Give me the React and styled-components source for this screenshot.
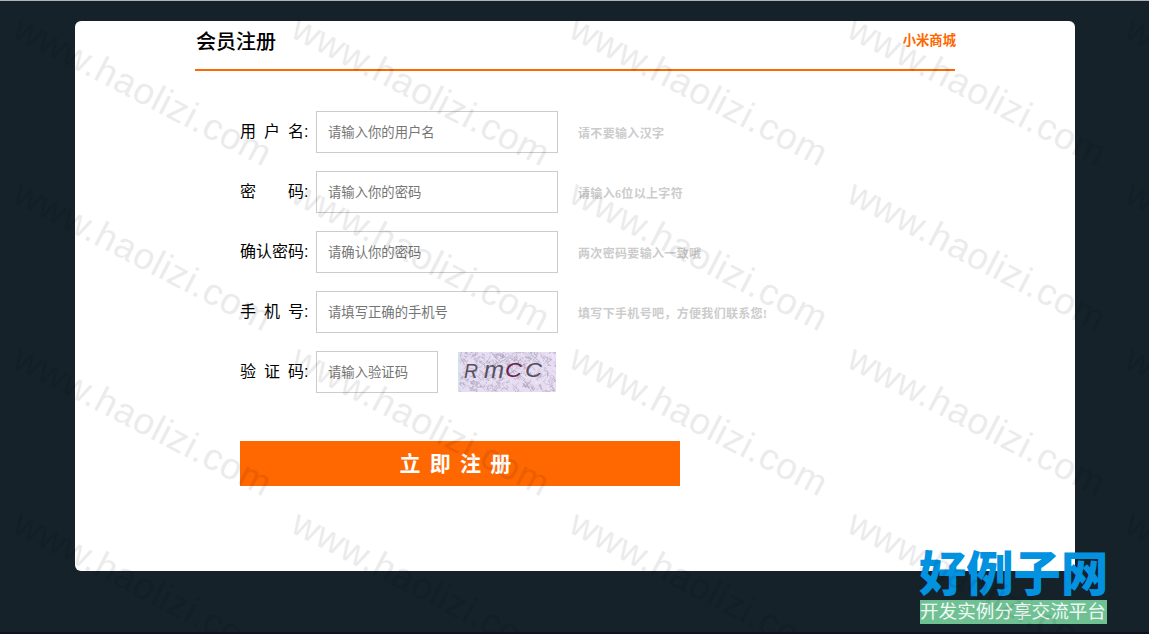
import React from 'react';
import styled, { createGlobalStyle } from 'styled-components';

const fields = [
  { label: ['用', '户', '名'], placeholder: '请输入你的用户名', hint: '请不要输入汉字' },
  { label: ['密', '码'], placeholder: '请输入你的密码', hint: '请输入6位以上字符' },
  { label: ['确', '认', '密', '码'], placeholder: '请确认你的密码', hint: '两次密码要输入一致哦' },
  { label: ['手', '机', '号'], placeholder: '请填写正确的手机号', hint: '填写下手机号吧，方便我们联系您!' },
];

// small repeatable generator, so the captcha noise is the same on every render
function makeNoise(count) {
  let seed = 29;
  const next = () => {
    seed = (seed * 16807) % 2147483647;
    return seed / 2147483647;
  };
  const colors = ['#a79fb8', '#b8b0c6', '#a19bb0', '#c9b4d0', '#b0aebf', '#f3ecfa'];
  return Array.from({ length: count }, () => {
    const x = next() * 98;
    const y = next() * 40;
    const d = () => (next() * 7 - 3.5).toFixed(1);
    return {
      d: `M${x.toFixed(1)} ${y.toFixed(1)}l${d()} ${d()}l${d()} ${d()}`,
      color: colors[Math.floor(next() * colors.length)],
    };
  });
}

const noise = makeNoise(480);

function Captcha() {
  return (
    <CaptchaImage viewBox="0 0 98 40">
      <rect width="98" height="40" fill="#e6ddf2" />
      <g fill="none" strokeWidth="0.6">
        {noise.map((n, i) => <path key={i} d={n.d} stroke={n.color} />)}
      </g>
      <rect width="1.5" height="40" fill="#cfe4f0" />
      <g fontFamily="Liberation Sans, sans-serif" fontStyle="italic" fill="#55505e">
        <text x="6" y="26" fontSize="21" textLength="14" lengthAdjust="spacingAndGlyphs">R</text>
        <text x="26" y="26" fontSize="23" textLength="20" lengthAdjust="spacingAndGlyphs">m</text>
        <text x="47" y="25" fontSize="21" textLength="17" lengthAdjust="spacingAndGlyphs" fill="#6b2549">C</text>
        <text x="67" y="25" fontSize="21" textLength="17" lengthAdjust="spacingAndGlyphs">C</text>
      </g>
    </CaptchaImage>
  );
}

function Field({ label, placeholder, hint, short, children }) {
  return (
    <Row>
      <Label>
        <LabelText>{label.map((c, i) => <span key={i}>{c}</span>)}</LabelText>:
      </Label>
      <Input placeholder={placeholder} $short={short} />
      {children}
      {hint && <Hint>{hint}</Hint>}
    </Row>
  );
}

function App() {
  return (
    <Page>
      <GlobalStyle />
      <Panel>
        <Header>
          <Title>会员注册</Title>
          <ShopLink href="#">小米商城</ShopLink>
        </Header>
        <Form>
          {fields.map(f => <Field key={f.placeholder} {...f} />)}
          <Field label={['验', '证', '码']} placeholder="请输入验证码" short>
            <Captcha />
          </Field>
          <Submit type="button">立即注册</Submit>
        </Form>
      </Panel>
      <SiteBadge>
        <SiteName>好例子网</SiteName>
        <SiteSlogan>开发实例分享交流平台</SiteSlogan>
      </SiteBadge>
      <Watermark>
        {Array.from({ length: 20 }, (_, i) => (
          <Mark key={i}>www.haolizi.com</Mark>
        ))}
      </Watermark>
    </Page>
  );
}

export default App;

const GlobalStyle = createGlobalStyle`
* {
    box-sizing: border-box;
}
body {
    margin: 0;
    font-family: "Liberation Sans", "Noto Sans CJK SC", sans-serif;
}
`;

const Page = styled.div`
position: relative;
height: 634px;
padding-top: 20px;
overflow: hidden;
background: #15222a;
border-top: 1px solid #b1b3b4;
border-bottom: 2px solid #10131f;
`;

const Panel = styled.main`
width: 1000px;
height: 550px;
margin-left: 75px;
padding: 0 120px;
background: #fff;
border-radius: 6px;
`;

const Header = styled.header`
display: flex;
justify-content: space-between;
height: 50px;
border-bottom: 2px solid #ff6700;
`;

const Title = styled.h1`
margin: 0 0 0 1px;
font-family: "Liberation Serif", "Noto Sans CJK SC", serif;
font-size: 20px;
font-weight: 500;
line-height: 42px;
`;

const ShopLink = styled.a`
margin-right: -1px;
color: #ff6700;
font-size: 13.33px;
font-weight: bold;
line-height: 40px;
text-decoration: none;
`;

const Form = styled.form`
display: flex;
flex-direction: column;
gap: 18px;
padding: 40px 0 0 45px;
`;

const Row = styled.div`
display: flex;
align-items: center;
height: 42px;
`;

const Label = styled.label`
display: flex;
width: 76px;
font-size: 16px;
line-height: 40px;
`;

const LabelText = styled.span`
display: flex;
justify-content: space-between;
width: 64px;
`;

const Input = styled.input`
width: ${props => (props.$short ? '122px' : '242px')};
height: 42px;
padding: 0 11px;
border: 1px solid #ccc;
border-radius: 0;
background: transparent;
font-family: inherit;
font-size: 13.33px;
&::placeholder {
    color: #757575;
}
`;

const Hint = styled.span`
margin-left: 20px;
padding-top: 2px;
color: #ccc;
font-family: "Liberation Serif", "Noto Sans CJK SC", serif;
font-size: 12px;
font-weight: bold;
letter-spacing: 0.33px;
white-space: nowrap;
`;

const CaptchaImage = styled.svg`
width: 98px;
height: 40px;
margin-left: 20px;
`;

const Submit = styled.button`
width: 440px;
height: 45px;
margin-top: 30px;
padding: 0 0 4px;
border: 0;
background: #ff6700;
color: #fff;
font-family: "Liberation Serif", "Noto Sans CJK SC", serif;
font-size: 21px;
font-weight: bold;
letter-spacing: 9.2px;
`;

const SiteBadge = styled.div`
position: absolute;
left: 919px;
top: 548px;
width: 188px;
`;

const SiteName = styled.div`
height: 51px;
color: #0292e0;
font-family: "Liberation Serif", "Noto Sans CJK SC", serif;
font-size: 47.3px;
font-weight: 900;
line-height: 53px;
white-space: nowrap;
`;

const SiteSlogan = styled.div`
height: 24px;
margin-left: 1px;
background: #6fc194;
color: #f0faf4;
font-size: 18.6px;
line-height: 23px;
white-space: nowrap;
`;

const Watermark = styled.div`
position: absolute;
left: 10px;
top: 37px;
display: grid;
grid-template-columns: repeat(5, 278px);
grid-auto-rows: 165px;
opacity: 0.075;
pointer-events: none;
`;

const Mark = styled.span`
color: #000;
font-size: 37px;
line-height: 36px;
letter-spacing: 0.75px;
white-space: nowrap;
transform: rotate(27.4deg);
transform-origin: 0 32px;
margin-top: -32px;
`;
